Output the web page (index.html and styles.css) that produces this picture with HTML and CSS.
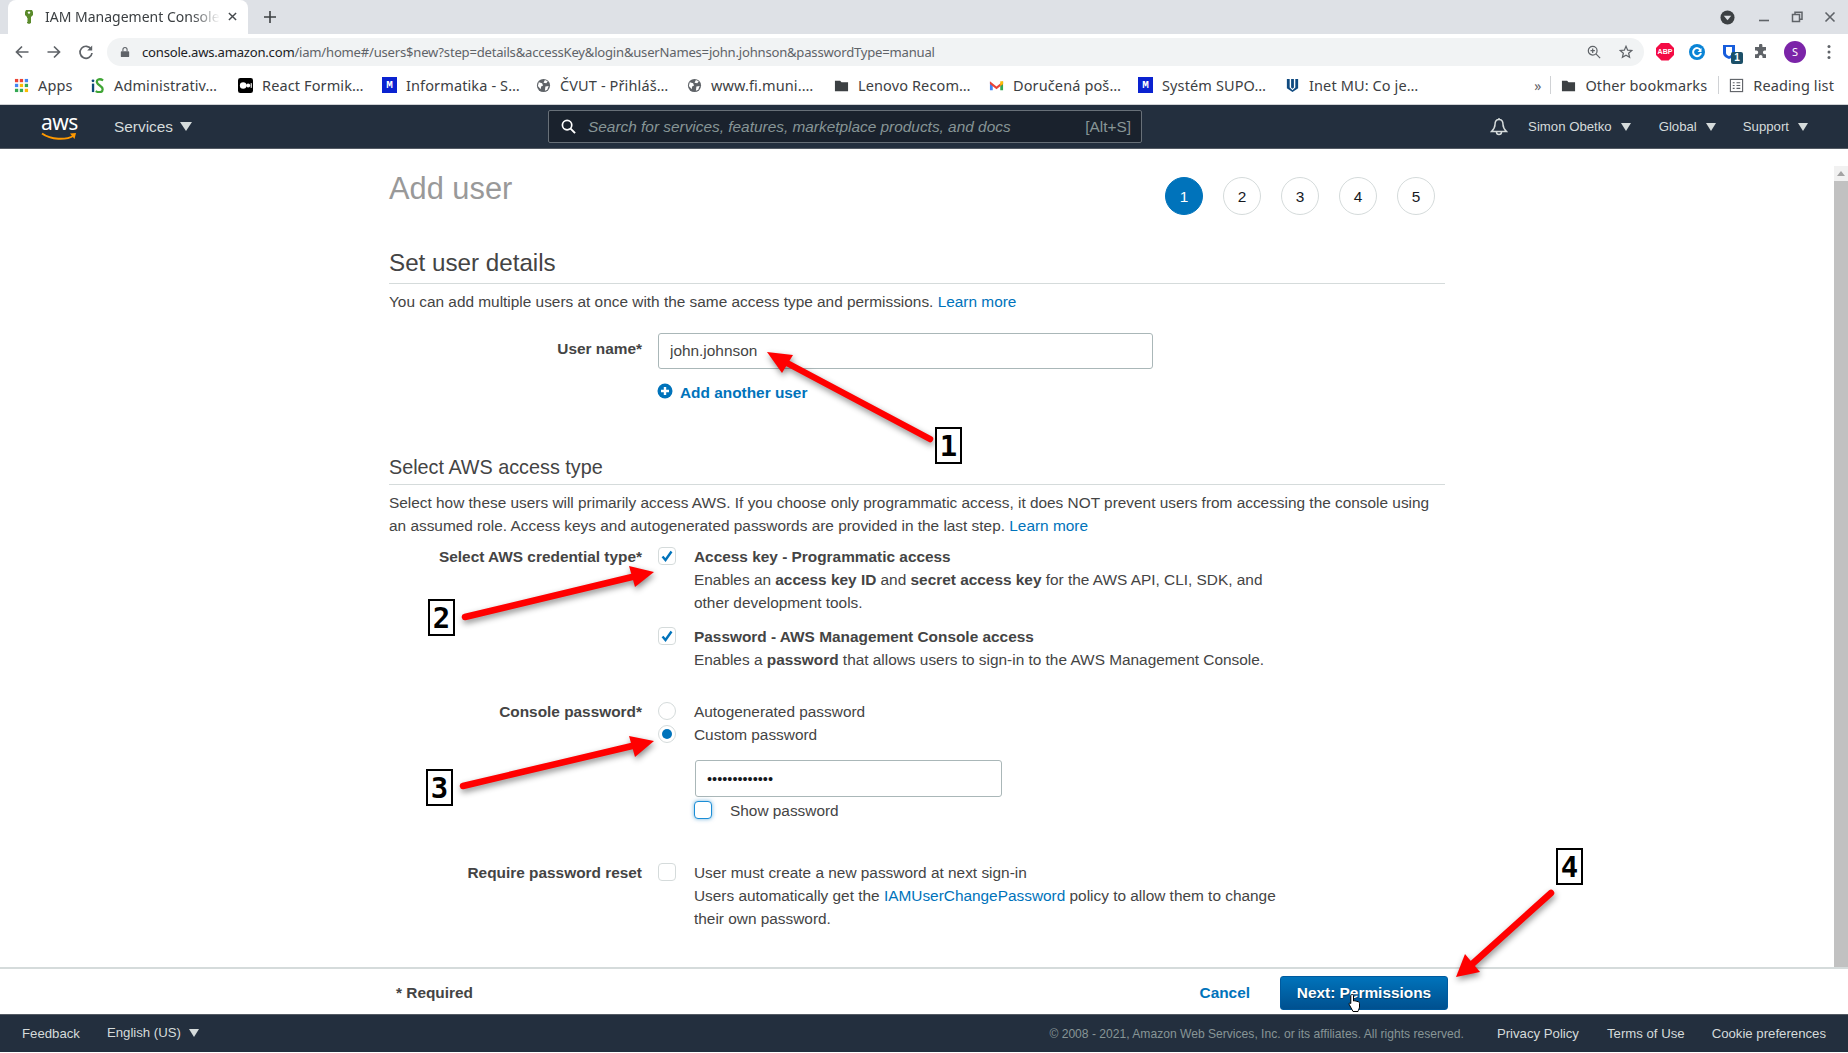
FILE: index.html
```html
<!DOCTYPE html>
<html lang="en">
<head>
<meta charset="utf-8">
<title>IAM Management Console</title>
<link rel="stylesheet" href="styles.css">
</head>
<body>
<div class="app">
  <div class="tabstrip">
    <div class="tab">
      <svg class="favicon" viewBox="0 0 16 16"><path d="M5 1h6l1 2v3l-2 2v6l-2 1-2-1v-1l1-1-1-1 1-1-1-1V8L4 6V3z" fill="#5a8a2b"/><circle cx="8" cy="3.6" r="1.2" fill="#fff"/></svg>
      <span class="tab-title">IAM Management Console</span>
      <svg class="tab-x" viewBox="0 0 10 10"><path d="M1 1l8 8M9 1l-8 8" stroke="#45494d" stroke-width="1.6"/></svg>
    </div>
    <svg class="newtab" viewBox="0 0 12 12"><path d="M6 0v12M0 6h12" stroke="#3c4043" stroke-width="1.6"/></svg>
    <div class="winctl">
      <svg class="wc-media" viewBox="0 0 16 16"><circle cx="8" cy="8" r="7.5" fill="#3c4043"/><path d="M4 6h8l-4 5z" fill="#dee1e6"/></svg>
      <svg class="wc" viewBox="0 0 12 12"><path d="M1 9.5h10" stroke="#5f6368" stroke-width="1.6"/></svg>
      <svg class="wc" viewBox="0 0 12 12"><path d="M4 3V1.200h7v7H9M1.500 3.500h7v7h-7z" fill="none" stroke="#5f6368" stroke-width="1.500"/></svg>
      <svg class="wc" viewBox="0 0 12 12"><path d="M1.500 1.500l9 9M10.500 1.500l-9 9" stroke="#5f6368" stroke-width="1.600"/></svg>
    </div>
  </div>

  <div class="toolbar">
    <svg class="tb-icon" viewBox="0 0 16 16"><path d="M14.500 8H2.500M8 2.500L2.500 8 8 13.500" fill="none" stroke="#5f6368" stroke-width="1.700"/></svg>
    <svg class="tb-icon" viewBox="0 0 16 16"><path d="M1.500 8h12M8 2.500L13.500 8 8 13.500" fill="none" stroke="#5f6368" stroke-width="1.700"/></svg>
    <svg class="tb-icon" viewBox="0 0 16 16"><path d="M13.200 5.200A6 6 0 1 0 14 9" fill="none" stroke="#5f6368" stroke-width="1.700"/><path d="M14.200 1.500v5h-5z" fill="#5f6368"/></svg>
    <div class="omnibox">
      <svg class="lock" viewBox="0 0 12 14"><path d="M2 6h8a1 1 0 0 1 1 1v5a1 1 0 0 1-1 1H2a1 1 0 0 1-1-1V7a1 1 0 0 1 1-1z" fill="#5f6368"/><path d="M3.500 6V4a2.500 2.500 0 0 1 5 0v2" fill="none" stroke="#5f6368" stroke-width="1.300"/></svg>
      <span class="url"><span class="url-host">console.aws.amazon.com</span>/iam/home#/users$new?step=details&amp;accessKey&amp;login&amp;userNames=john.johnson&amp;passwordType=manual</span>
      <svg class="omni-icon" viewBox="0 0 16 16"><circle cx="6.500" cy="6.500" r="5" fill="none" stroke="#5f6368" stroke-width="1.400"/><path d="M10.200 10.200L15 15M6.500 4v5M4 6.500h5" stroke="#5f6368" stroke-width="1.400"/></svg>
      <svg class="omni-icon" viewBox="0 0 16 16"><path d="M8 1.500l1.900 4.400 4.700.4-3.600 3.100 1.100 4.600L8 11.600 3.900 14l1.100-4.600L1.400 6.300l4.700-.4z" fill="none" stroke="#5f6368" stroke-width="1.400"/></svg>
    </div>
    <div class="extensions">
      <span class="ext-abp">ABP</span>
      <svg class="ext" viewBox="0 0 16 16"><circle cx="8" cy="8" r="8" fill="#0a84d6"/><path d="M11.500 6A4 4 0 1 0 12 9" fill="none" stroke="#fff" stroke-width="2"/><path d="M12.500 4v4H8.500z" fill="#fff"/></svg>
      <span class="ext-bw">
        <svg class="ext" viewBox="0 0 16 16"><path d="M2 1h12v8c0 3-3 5-6 6-3-1-6-3-6-6z" fill="#175ddc"/><path d="M5 3h6v6c0 1.500-1.500 2.500-3 3.200-1.500-.7-3-1.700-3-3.200z" fill="#fff"/></svg>
        <span class="ext-badge">1</span>
      </span>
      <svg class="ext" viewBox="0 0 16 16"><path d="M6 1.500a1.700 1.700 0 0 1 3.400 0V3H13v3.600h-1.300a1.800 1.800 0 0 0 0 3.600H13V14H9.500v-1.300a1.800 1.800 0 0 0-3.600 0V14H2v-3.800h1.400a1.800 1.800 0 0 0 0-3.600H2V3h4z" fill="#5f6368"/></svg>
      <span class="avatar">S</span>
      <svg class="ext-menu" viewBox="0 0 4 16"><circle cx="2" cy="2.500" r="1.500" fill="#5f6368"/><circle cx="2" cy="8" r="1.500" fill="#5f6368"/><circle cx="2" cy="13.500" r="1.500" fill="#5f6368"/></svg>
    </div>
  </div>

  <div class="bookmarks">
    <div class="bm-grid">
      <a class="bm"><svg class="bm-i" viewBox="0 0 16 16"><g fill="#ea4335"><rect x="1" y="1" width="3.500" height="3.500"/><rect x="6.200" y="1" width="3.500" height="3.500"/></g><rect x="11.500" y="1" width="3.500" height="3.500" fill="#4285f4"/><rect x="1" y="6.200" width="3.500" height="3.500" fill="#4285f4"/><rect x="6.200" y="6.200" width="3.500" height="3.500" fill="#fbbc05"/><rect x="11.500" y="6.200" width="3.500" height="3.500" fill="#34a853"/><rect x="1" y="11.500" width="3.500" height="3.500" fill="#34a853"/><rect x="6.200" y="11.500" width="3.500" height="3.500" fill="#34a853"/><rect x="11.500" y="11.500" width="3.500" height="3.500" fill="#fbbc05"/></svg>Apps</a>
      <a class="bm"><svg class="bm-i" viewBox="0 0 16 16"><path d="M2 6h2.500v9H2z" fill="#0c4a7a"/><circle cx="3.200" cy="3" r="1.500" fill="#0c4a7a"/><path d="M14 2.500C10 0 6.500 2 7.500 5s6 3.500 6 7-4 4-7.500 2" fill="none" stroke="#3fa535" stroke-width="2.400"/></svg>Administrativ…</a>
      <a class="bm"><svg class="bm-i" viewBox="0 0 16 16"><rect width="16" height="16" rx="2.500" fill="#000"/><circle cx="5.500" cy="8" r="3.500" fill="#fff"/><circle cx="10.800" cy="8" r="2.200" fill="#fff"/><rect x="13.500" y="5.500" width="1.200" height="5" fill="#fff"/></svg>React Formik…</a>
      <a class="bm"><span class="bm-m">M</span>Informatika - S…</a>
      <a class="bm"><svg class="bm-i" viewBox="0 0 16 16"><circle cx="8" cy="8" r="7" fill="#5f6368"/><path d="M3 4.500l3.500 1 1 2.500-2 1-.5 3L2 8.500zM9.500 2l3 1.500-1.500 2-3-.5zM10 9l3.500-.5-1.500 4-2.500 1z" fill="#fff"/></svg>ČVUT - Přihláš…</a>
      <a class="bm"><svg class="bm-i" viewBox="0 0 16 16"><circle cx="8" cy="8" r="7" fill="#5f6368"/><path d="M3 4.500l3.500 1 1 2.500-2 1-.5 3L2 8.500zM9.500 2l3 1.500-1.500 2-3-.5zM10 9l3.500-.5-1.500 4-2.500 1z" fill="#fff"/></svg>www.fi.muni.…</a>
      <a class="bm"><svg class="bm-i" viewBox="0 0 16 16"><path d="M1 3h5.500L8 4.500h7V14H1z" fill="#3c4043"/></svg>Lenovo Recom…</a>
      <a class="bm"><svg class="bm-i" viewBox="0 0 16 16"><path d="M1 4v9h3V7z" fill="#4285f4"/><path d="M15 4v9h-3V7z" fill="#34a853"/><path d="M1 3.500L8 9l7-5.500V6.500L8 12 1 6.500z" fill="#ea4335"/><path d="M12 3.500h3v3l-3 2z" fill="#fbbc05"/></svg>Doručená poš…</a>
      <a class="bm"><span class="bm-m">M</span>Systém SUPO…</a>
      <a class="bm"><svg class="bm-i" viewBox="0 0 16 16"><path d="M2 1h3v9l3 3 3-3V1h3v10l-6 4-6-4z" fill="#0f4a80"/><path d="M6.500 1h3v9l-1.500 1.500L6.500 10z" fill="#0f4a80"/></svg>Inet MU: Co je…</a>
    </div>
    <div class="bm-right">
      <span class="bm-more">»</span>
      <span class="bm-sep"></span>
      <a class="bm"><svg class="bm-i" viewBox="0 0 16 16"><path d="M1 3h5.500L8 4.500h7V14H1z" fill="#3c4043"/></svg>Other bookmarks</a>
      <span class="bm-sep"></span>
      <a class="bm"><svg class="bm-i" viewBox="0 0 16 16"><rect x="1.500" y="1.500" width="13" height="13" fill="none" stroke="#5f6368" stroke-width="1.200"/><path d="M4 5h2M8 5h4M4 8h2M8 8h4M4 11h2M8 11h4" stroke="#5f6368" stroke-width="1.200"/></svg>Reading list</a>
    </div>
  </div>

  <nav class="awsnav">
    <div class="aws-logo">
      <span class="aws-word">aws</span>
      <svg class="aws-smile" viewBox="0 0 36 9"><path d="M1 1.500C10 8 25 8.500 33 3.500" fill="none" stroke="#f90" stroke-width="2"/><path d="M29 1.500l6-.5-1.500 6z" fill="#f90"/></svg>
    </div>
    <span class="nav-services">Services<i class="caret caret-lg"></i></span>
    <div class="nav-search">
      <svg class="search-i" viewBox="0 0 16 16"><circle cx="6.500" cy="6.500" r="5" fill="none" stroke="#fff" stroke-width="1.800"/><path d="M10.200 10.200L15 15" stroke="#fff" stroke-width="2"/></svg>
      <span class="search-ph">Search for services, features, marketplace products, and docs</span>
      <span class="search-key">[Alt+S]</span>
    </div>
    <div class="nav-right">
      <svg class="bell" viewBox="0 0 18 20"><path d="M9 2.500c3 0 4 2.500 4 5 0 3 1.500 5 3.500 7h-15c2-2 3.500-4 3.500-7 0-2.500 1-5 4-5zM9 1v1.500" fill="none" stroke="#d5dbdb" stroke-width="1.500"/><path d="M6.500 15a2.500 2.500 0 0 0 5 0" fill="none" stroke="#d5dbdb" stroke-width="1.500"/></svg>
      <span class="nav-item nav-user">Simon Obetko<i class="caret"></i></span>
      <span class="nav-item nav-global">Global<i class="caret"></i></span>
      <span class="nav-item">Support<i class="caret"></i></span>
    </div>
  </nav>

  <div class="main">
    <div class="scroll">
      <div class="column">
        <div class="page-head">
          <h1>Add user</h1>
          <ol class="steps">
            <li class="step step-on">1</li><li class="step">2</li><li class="step">3</li><li class="step">4</li><li class="step">5</li>
          </ol>
        </div>
        <h2 class="h-details">Set user details</h2>
        <p class="lead">You can add multiple users at once with the same access type and permissions. <a class="link">Learn more</a></p>
        <div class="row row-user">
          <label class="row-label">User name*</label>
          <div class="row-wide">
            <input class="field field-user" type="text" value="john.johnson">
            <a class="add-user"><svg class="plus" viewBox="0 0 16 16"><circle cx="8" cy="8" r="7.500" fill="#0073bb"/><path d="M8 4v8M4 8h8" stroke="#fff" stroke-width="2.400"/></svg>Add another user</a>
          </div>
        </div>
        <h3 class="h-access">Select AWS access type</h3>
        <p class="lead">Select how these users will primarily access AWS. If you choose only programmatic access, it does NOT prevent users from accessing the console using an assumed role. Access keys and autogenerated passwords are provided in the last step. <a class="link">Learn more</a></p>

        <div class="row row-cred">
          <label class="row-label">Select AWS credential type*</label>
          <span class="box box-on"><svg class="tick" viewBox="0 0 12 12"><path d="M1.500 6.500l3 3.500 6-8.500" fill="none" stroke="#0073bb" stroke-width="2.400"/></svg></span>
          <div class="row-text"><b>Access key - Programmatic access</b><br>Enables an <b>access key ID</b> and <b>secret access key</b> for the AWS API, CLI, SDK, and other development tools.</div>
        </div>
        <div class="row row-cred2">
          <span class="row-label"></span>
          <span class="box box-on"><svg class="tick" viewBox="0 0 12 12"><path d="M1.500 6.500l3 3.500 6-8.500" fill="none" stroke="#0073bb" stroke-width="2.400"/></svg></span>
          <div class="row-text"><b>Password - AWS Management Console access</b><br>Enables a <b>password</b> that allows users to sign-in to the AWS Management Console.</div>
        </div>
        <div class="row row-console">
          <label class="row-label">Console password*</label>
          <span class="radio"></span>
          <div class="row-text">Autogenerated password</div>
        </div>
        <div class="row">
          <span class="row-label"></span>
          <span class="radio radio-on"></span>
          <div class="row-text">Custom password</div>
        </div>
        <div class="row row-pw">
          <span class="row-label"></span><span></span>
          <div>
            <input class="field field-pw" type="password" value="aaaaaaaaaaaaa">
            <div class="show-pw"><span class="box box-focus"></span>Show password</div>
          </div>
        </div>
        <div class="row row-reset">
          <label class="row-label">Require password reset</label>
          <span class="box"></span>
          <div class="row-text">User must create a new password at next sign-in<br>Users automatically get the <a class="link">IAMUserChangePassword</a> policy to allow them to change their own password.</div>
        </div>
      </div>
    </div>
    <div class="scrollbar">
      <div class="sb-up"><i class="sb-arrow"></i></div>
      <div class="sb-thumb"></div>
    </div>
  </div>

  <div class="actions">
    <span class="required">* Required</span>
    <a class="cancel">Cancel</a>
    <button class="next">Next: Permissions</button>
  </div>

  <footer class="foot">
    <span class="foot-feedback">Feedback</span>
    <span class="foot-lang">English (US)<i class="caret caret-sm"></i></span>
    <span class="foot-copy">© 2008 - 2021, Amazon Web Services, Inc. or its affiliates. All rights reserved.</span>
    <span class="foot-link foot-first">Privacy Policy</span>
    <span class="foot-link">Terms of Use</span>
    <span class="foot-link">Cookie preferences</span>
  </footer>

  <svg class="arrows" viewBox="0 0 1848 1053">
    <g class="arrow-set" fill="#f00" stroke="none">
      <path d="M930 439L787 363" stroke="#f00" stroke-width="6.500" stroke-linecap="round"/>
      <polygon points="767,352 793,355 782,373"/>
      <path d="M465 617L632 577" stroke="#f00" stroke-width="6.500" stroke-linecap="round"/>
      <polygon points="654,572 629,566 635,587"/>
      <path d="M463 786L632 746" stroke="#f00" stroke-width="6.500" stroke-linecap="round"/>
      <polygon points="654,741 629,736 635,757"/>
      <path d="M1551 893L1470 966" stroke="#f00" stroke-width="6.500" stroke-linecap="round"/>
      <polygon points="1456,977 1465,954 1480,972"/>
    </g>
  </svg>
  <span class="num num-1">1</span>
  <span class="num num-2">2</span>
  <span class="num num-3">3</span>
  <span class="num num-4">4</span>
  <svg class="hand" viewBox="0 0 14 20"><path d="M4 1.500c1 0 1.500.5 1.500 1.500v5l1-.2 1 .2 1 .3 1.500.3c1 .2 1.500.8 1.500 2v3.400c0 1-1 3-1.500 4.500H5L1.500 12c-.7-1-.5-2 .5-2l.8.5V3c0-1 .3-1.500 1.200-1.500z" fill="#fff" stroke="#000" stroke-width="1"/></svg>
</div>
</body>
</html>
```

FILE: styles.css
```css
* { box-sizing: border-box; }
html, body { margin: 0; height: 100%; overflow: hidden; }
body { font-family: "Liberation Sans", Arial, sans-serif; font-size: 15.4px; color: #444; background: #fff; }
.app { position: relative; display: flex; flex-direction: column; width: 1848px; height: 1053px; overflow: hidden; }

/* browser chrome */
.tabstrip { height: 34px; background: #dee1e6; display: flex; align-items: flex-end; padding-left: 8px; flex: none; }
.tab { width: 240px; height: 34px; background: #fff; border-radius: 8px 8px 0 0; display: flex; align-items: center; padding: 0 0 1px 13px; font: 14px "Noto Sans", sans-serif; color: #3c4043; }
.favicon { width: 16px; height: 16px; flex: none; }
.tab-title { margin-left: 8px; width: 175px; white-space: nowrap; overflow: hidden; -webkit-mask-image: linear-gradient(90deg, #000 84%, transparent); mask-image: linear-gradient(90deg, #000 84%, transparent); }
.tab-x { width: 9px; height: 9px; margin-left: 8px; flex: none; }
.newtab { width: 12px; height: 12px; margin: 0 0 11px 16px; flex: none; }
.winctl { margin-left: auto; display: flex; align-items: center; height: 34px; padding-right: 12px; }
.wc-media { width: 15px; height: 15px; margin-right: 23px; }
.wc { width: 12px; height: 12px; margin-right: 21px; }
.wc:last-child { margin-right: 0; }
.toolbar { height: 35px; background: #fff; display: flex; align-items: center; padding-left: 14px; flex: none; }
.tb-icon { width: 16px; height: 16px; margin-right: 16px; flex: none; }
.omnibox { width: 1537px; height: 28px; border-radius: 14px; background: #f1f3f4; display: flex; align-items: center; padding: 0 11px 0 13px; margin-left: -3px; flex: none; }
.lock { width: 10px; height: 12px; flex: none; }
.url { margin-left: 12px; font: 13.100px "Noto Sans", sans-serif; color: #5f6368; letter-spacing: -.22px; white-space: nowrap; flex: 1; }
.url-host { color: #202124; }
.omni-icon { width: 14px; height: 14px; margin-left: 18px; flex: none; }
.extensions { display: flex; align-items: center; margin-left: 12px; }
.ext { width: 16px; height: 16px; flex: none; display: block; }
.ext-abp { width: 18px; height: 18px; background: #f40b45; color: #fff; font: bold 7px "Liberation Sans", sans-serif; display: flex; align-items: center; justify-content: center; margin-right: 15px; clip-path: polygon(30% 0, 70% 0, 100% 30%, 100% 70%, 70% 100%, 30% 100%, 0 70%, 0 30%); }
.extensions > .ext { margin-right: 16px; }
.ext-bw { position: relative; margin-right: 16px; }
.ext-badge { position: absolute; left: 10px; top: 8px; width: 12px; height: 12px; background: #1c5068; border-radius: 2px; color: #fff; font: bold 10px "Liberation Sans", sans-serif; text-align: center; line-height: 12px; }
.avatar { width: 22px; height: 22px; border-radius: 50%; background: #7b24a8; color: #fff; font: 11px "Noto Sans", sans-serif; display: flex; align-items: center; justify-content: center; margin-left: -1px; }
.ext-menu { width: 4px; height: 16px; margin-left: 21px; }
.bookmarks { height: 36px; background: #fff; border-bottom: 1px solid #d0d2d5; display: flex; align-items: center; justify-content: space-between; padding: 0 0 3px 14px; flex: none; font: 14.500px "Noto Sans", sans-serif; letter-spacing: .12px; color: #3c4043; }
.bm-grid { display: grid; grid-template-columns: 76px 148px 144px 154px 151px 147px 155px 149px 147px 130px; align-items: center; }
.bm { display: flex; align-items: center; white-space: nowrap; }
.bm-i { width: 15px; height: 15px; flex: none; margin-right: 9px; }
.bm-m { width: 15px; height: 16px; flex: none; margin-right: 9px; background: #0a22d0; color: #fff; font: bold 11px "Liberation Mono", monospace; text-align: center; line-height: 16px; }
.bm-right { display: flex; align-items: center; padding-right: 14px; }
.bm-more { margin-right: 9px; color: #5f6368; font-size: 14px; }
.bm-sep { width: 1px; height: 18px; background: #d0d2d5; margin-right: 10px; }
.bm-right .bm { margin-right: 11px; }
.bm-right .bm:last-child { margin-right: 0; }

/* aws nav */
.awsnav { height: 44px; background: #232f3e; border-bottom: 1px solid #545b64; display: flex; align-items: center; flex: none; color: #d5dbdb; padding-left: 41px; }
.aws-logo { position: relative; width: 36px; height: 26px; flex: none; }
.aws-word { position: absolute; left: 0; top: -4px; font: 21px/24px "Noto Sans", sans-serif; color: #fff; letter-spacing: -.5px; }
.aws-smile { position: absolute; left: 0; bottom: -1px; width: 36px; height: 9px; }
.nav-services { margin-left: 37px; font-size: 15.400px; display: flex; align-items: center; width: 71px; flex: none; }
.caret { display: inline-block; width: 0; height: 0; border-left: 5px solid transparent; border-right: 5px solid transparent; border-top: 8px solid #d5dbdb; margin-left: 9px; }
.caret-lg { border-left-width: 6px; border-right-width: 6px; border-top-width: 9px; margin-left: 7px; }
.caret-sm { margin-left: 8px; }
.nav-search { margin-left: 363px; width: 594px; height: 33px; border: 1px solid #687078; border-radius: 2px; background: #1a222d; display: flex; align-items: center; padding: 0 10px 0 12px; flex: none; }
.search-i { width: 15px; height: 15px; flex: none; }
.search-ph { margin-left: 12px; font-style: italic; color: #879596; font-size: 15.400px; flex: 1; white-space: nowrap; }
.search-key { color: #879596; font-size: 15.400px; }
.nav-right { margin-left: auto; display: flex; align-items: center; font-size: 13.200px; padding-right: 40px; }
.bell { width: 18px; height: 20px; margin-right: 20px; }
.nav-item { display: flex; align-items: center; white-space: nowrap; }
.nav-item .caret { margin-left: 9px; }
.nav-user { margin-right: 28px; }
.nav-global { margin-right: 27px; }

/* main */
.main { height: 818px; display: flex; flex: none; }
.scroll { flex: 1; overflow: hidden; }
.column { width: 1056px; margin: 0 auto; line-height: 23px; }
.page-head { display: flex; justify-content: space-between; height: 99px; }
h1 { margin: 23px 0 0; font-size: 30.800px; font-weight: 400; line-height: 34px; color: #999; }
.steps { margin: 28px 10px 0 0; padding: 0; list-style: none; display: flex; gap: 20px; }
.step { width: 38px; height: 38px; border: 1px solid #d5dbdb; border-radius: 50%; color: #16191f; display: flex; align-items: center; justify-content: center; font-size: 15.400px; }
.step-on { background: #0073bb; border-color: #0073bb; color: #fff; }
h2 { margin: 0; font-size: 24.200px; font-weight: 400; line-height: 30px; padding-bottom: 5px; border-bottom: 1px solid #d5dbdb; }
h3 { margin: 50px 0 0; font-size: 19.800px; font-weight: 400; line-height: 26px; padding-bottom: 4px; border-bottom: 1px solid #d5dbdb; }
.lead { margin: 6px 0 0; }
.link { color: #0073bb; text-decoration: none; }
.row { display: grid; grid-template-columns: 269px 36px 1fr; }
.row-label { padding-right: 16px; text-align: right; font-weight: 700; color: #444; }
.row-user { margin-top: 20px; grid-template-columns: 269px 1fr; }
.row-user .row-label { line-height: 31px; }
.row-wide { display: flex; flex-direction: column; align-items: flex-start; }
.field { display: block; border: 1px solid #aab7b8; border-radius: 3px; background: #fff; color: #444; font: 15.400px "Liberation Sans", sans-serif; padding: 0 11px; outline: none; }
.field-user { width: 495px; height: 36px; }
.add-user { margin-top: 12px; display: flex; align-items: center; color: #0073bb; font-weight: 700; line-height: 23px; margin-left: -1px; }
.plus { width: 16px; height: 16px; margin: -3px 7px 0 0; }
.row-cred { margin-top: 8px; }
.row-cred2 { margin-top: 11px; }
.row-console { margin-top: 29px; }
.row-pw { margin-top: 14px; }
.row-reset { margin-top: 40px; }
.row-text { max-width: 596px; }
.row-text b { color: #444; }
.box { display: flex; align-items: center; justify-content: center; width: 18px; height: 18px; margin-top: 2px; border: 1px solid #d5dbdb; border-radius: 4px; background: #fff; }
.tick { width: 12px; height: 12px; }
.box-focus { border-color: #1a8dd6; box-shadow: 0 0 4px rgba(0, 115, 187, .55); margin: 0 18px 0 0; flex: none; }
.radio { display: block; width: 18px; height: 18px; margin-top: 2px; border: 1px solid #d5dbdb; border-radius: 50%; background: #fff; position: relative; }
.radio-on::after { content: ""; position: absolute; left: 3px; top: 3px; width: 10px; height: 10px; border-radius: 50%; background: #0073bb; }
.field-pw { width: 307px; height: 37px; color: #16191f; font-size: 14.500px; margin-left: 1px; }
.show-pw { margin-top: 2px; display: flex; align-items: center; height: 22px; }
.scrollbar { width: 14px; flex: none; padding-top: 17px; background: #fff; }
.sb-up { height: 15px; background: #f1f1f1; display: flex; justify-content: center; align-items: center; }
.sb-arrow { width: 0; height: 0; border-left: 4px solid transparent; border-right: 4px solid transparent; border-bottom: 5px solid #a3a3a3; }
.sb-thumb { height: 786px; background: #c1c1c1; }

/* action bar */
.actions { height: 47px; flex: none; border-top: 2px solid #d5dbdb; background: #fff; display: flex; align-items: center; padding: 2px 400px 0 396px; }
.required { font-weight: 700; color: #444; }
.cancel { margin-left: auto; color: #0073bb; font-weight: 700; }
.next { margin-left: 30px; width: 168px; height: 34px; border: 1px solid #005a9e; border-radius: 3px; background: linear-gradient(#0073bb, #00508f); color: #fff; font: 700 15.400px "Liberation Sans", sans-serif; text-shadow: 0 1px 1px rgba(0,0,0,.4); padding: 0; }

/* footer */
.foot { height: 38px; flex: none; background: #232f3e; border-top: 1px solid #545b64; display: flex; align-items: center; padding: 0 22px; font-size: 13.200px; color: #d5dbdb; }
.foot-lang { margin-left: 27px; margin-top: -2px; display: flex; align-items: center; }
.foot-copy { margin-left: auto; font-size: 12.100px; color: #879596; }
.foot-link { margin-left: 28px; white-space: nowrap; }
.foot-link:last-child { margin-left: 27px; }
.foot-first { margin-left: 33px; }

/* annotations */
.arrows { position: absolute; left: 0; top: 0; width: 1848px; height: 1053px; pointer-events: none; }
.arrow-set { filter: drop-shadow(1px 3px 3px rgba(0, 0, 0, .45)); }
.num { position: absolute; display: flex; align-items: center; justify-content: center; width: 27px; height: 37px; border: 2px solid #000; background: #fff; color: #000; font: 700 29px "DejaVu Sans Mono", monospace; }
.num-1 { left: 935px; top: 427px; }
.num-2 { left: 428px; top: 599px; }
.num-3 { left: 426px; top: 769px; }
.num-4 { left: 1556px; top: 848px; }
.hand { position: absolute; left: 1348px; top: 993px; width: 14px; height: 20px; }
```
